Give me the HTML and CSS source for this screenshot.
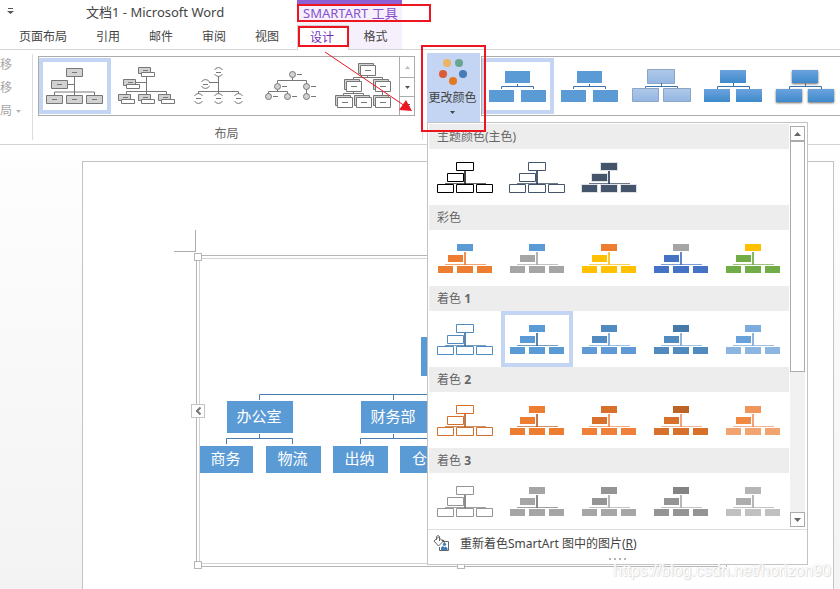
FILE: index.html
```html
<!DOCTYPE html>
<html lang="zh-CN">
<head>
<meta charset="utf-8">
<title>文档1 - Microsoft Word</title>
<link rel="stylesheet" href="styles.css">
</head>
<body>
<svg class="defs" aria-hidden="true">
  <defs>
    <linearGradient id="soft" x1="0" y1="0" x2="0" y2="1"><stop offset="0" stop-color="#b0c8e8"/><stop offset="1" stop-color="#93b7e3"/></linearGradient>
    <linearGradient id="glossy" x1="0" y1="0" x2="0" y2="1"><stop offset="0" stop-color="#6ba3dd"/><stop offset="1" stop-color="#3f8acb"/></linearGradient>
    <symbol id="solid" viewBox="0 0 72 56">
      <path class="line" d="M16 34h41v1H16z"/><path class="stem" d="M35 22h2v13h-2z"/>
      <path class="top" d="M28 14h16v7H28z"/><path class="mid" d="M19 25h15v7H19z"/>
      <path class="low" d="M9 36h15v7H9zM28 36h16v7H28zM48 36h15v7H48z"/>
    </symbol>
    <symbol id="outline" viewBox="0 0 72 56">
      <path class="line" d="M16 34h41v1H16z"/><path class="stem" d="M35 22h2v13h-2z"/>
      <path class="box" d="M27.500 13.500h17v8h-17zM18.500 24.500h16v8h-16zM8.500 35.500h16v8h-16zM27.500 35.500h17v8h-17zM47.500 35.500h16v8h-16z"/>
    </symbol>
    <symbol id="flat" viewBox="0 0 72 56">
      <path class="wire" d="M35.500 26v2M19.500 31v-2.500h32V31"/>
      <path class="fill" d="M23 13h25v12H23zM7 32h25v12H7zM39 32h25v12H39z"/>
    </symbol>
  </defs>
</svg>

<header class="app-header">
  <div class="main-head">
    <div class="title-row">
      <button class="quick" aria-label="自定义快速访问工具栏"><svg width="7" height="8" viewBox="0 0 7 8"><path d="M1 0h5v1H1zM0 3h7L3.500 6z"/></svg></button>
      <span class="doc-title">文档1 - Microsoft Word</span>
    </div>
    <nav class="tabs">
      <button>页面布局</button><button>引用</button><button>邮件</button><button>审阅</button><button>视图</button>
    </nav>
  </div>
  <div class="context-head">
    <div class="context-title">SMARTART 工具</div>
    <nav class="context-tabs"><button class="active">设计</button><button>格式</button></nav>
  </div>
</header>

<section class="ribbon">
  <div class="commands">
    <button>移</button><button>移</button>
    <button>局 <svg width="5" height="3" viewBox="0 0 5 3"><path d="M0 0h5L2.500 3z"/></svg></button>
  </div>
  <div class="group">
    <div class="gallery">
      <button class="cell selected" aria-label="组织结构图">
        <svg class="thumb layout" viewBox="0 0 72 56"><path class="wire" d="M35.500 19v15M29 26.500h6M15.500 37v-3h40v3M35.500 34v3"/><path class="shade" d="M27.500 10.500h16v8h-16zM12.500 22.500h16v8h-16zM7.500 37.500h16v8h-16zM27.500 37.500h16v8h-16zM47.500 37.500h16v8h-16z"/><path class="wire" d="M33 14.500h5M18 26.500h5M13 41.500h5M33 41.500h5M53 41.500h5"/></svg>
      </button>
      <button class="cell" aria-label="姓名和职务组织结构图">
        <svg class="thumb layout" viewBox="0 0 72 56"><path class="wire" d="M35.500 18v18M24 24.500h11M15.500 36v-2.500h40V36"/><path class="shade" d="M27.500 9.500h12v6h-12zM12.500 21.500h12v6h-12zM7.500 36.500h12v6h-12zM27.500 36.500h12v6h-12zM47.500 36.500h12v6h-12z"/><path class="wire" d="M32 12.500h5M17 24.500h5M12 39.500h5M32 39.500h5M52 39.500h5"/><path class="plain" d="M30.500 14.500h13v4h-13zM15.500 26.500h13v4h-13zM10.500 41.500h13v4h-13zM30.500 41.500h13v4h-13zM50.500 41.500h13v4h-13z"/></svg>
      </button>
      <button class="cell" aria-label="半圆组织结构图">
        <svg class="thumb layout" viewBox="0 0 72 56"><path class="wire" d="M35.500 18v18M26 24.500h9M15.500 36v-2.500h40V36M33 14.500h5M20 26.500h5M13 40.500h5M33 40.500h5M53 40.500h5"/><path class="wire" d="M31.500 12a4.500 4.500 0 0 1 8 0M31.500 16a4.500 4.500 0 0 0 8 0M18.500 24a4.500 4.500 0 0 1 8 0M18.500 28a4.500 4.500 0 0 0 8 0M11.500 38a4.500 4.500 0 0 1 8 0M11.500 43a4.500 4.500 0 0 0 8 0M31.500 38a4.500 4.500 0 0 1 8 0M31.500 43a4.500 4.500 0 0 0 8 0M51.500 38a4.500 4.500 0 0 1 8 0M51.500 43a4.500 4.500 0 0 0 8 0"/></svg>
      </button>
      <button class="cell" aria-label="圆形图片层次结构">
        <svg class="thumb layout" viewBox="0 0 72 56"><path class="wire" d="M37.500 19v3.500M22.500 25v-2.500h29V38M22.500 31v2.500M13.500 36v-2.500h19V36M42 16.500h5M27 28.500h5M56 28.500h5M18 38.500h5M37 38.500h5M56 38.500h5"/><g class="shade"><circle cx="37.500" cy="16.500" r="3"/><circle cx="22.500" cy="28.500" r="3"/><circle cx="51.500" cy="28.500" r="3"/><circle cx="13.500" cy="38.500" r="3"/><circle cx="32.500" cy="38.500" r="3"/><circle cx="51.500" cy="38.500" r="3"/></g></svg>
      </button>
      <button class="cell" aria-label="层次结构">
        <svg class="thumb layout" viewBox="0 0 72 56"><path class="wire" d="M40.500 18v2M26.500 22v-2.500h29V22M26.500 34v2M16.500 38v-2.500h20V38M55.500 34v4"/><path class="shade" d="M31.500 5.500h15v10h-15zM17.500 21.500h15v10h-15zM46.500 21.500h15v10h-15zM8.500 37.500h15v10h-15zM27.500 37.500h15v10h-15zM46.500 37.500h15v10h-15z"/><path class="plain" d="M33.500 7.500h15v10h-15zM19.500 23.500h15v10h-15zM48.500 23.500h15v10h-15zM10.500 39.500h15v10h-15zM29.500 39.500h15v10h-15zM48.500 39.500h15v10h-15z"/><path class="wire" d="M38 12.500h6M24 28.500h6M53 28.500h6M15 44.500h6M34 44.500h6M53 44.500h6"/></svg>
      </button>
      <div class="spinner">
        <button class="off" aria-label="上一行"><svg width="5" height="3" viewBox="0 0 5 3"><path d="M0 3h5L2.500 0z"/></svg></button>
        <button aria-label="下一行"><svg width="5" height="3" viewBox="0 0 5 3"><path d="M0 0h5L2.500 3z"/></svg></button>
        <button aria-label="其他"><svg width="5" height="5" viewBox="0 0 5 5"><path d="M0 0h5v1H0zM0 2h5L2.500 5z"/></svg></button>
      </div>
    </div>
    <div class="group-name">布局</div>
  </div>

  <div class="colors">
    <button class="change-colors" aria-expanded="true">
      <svg width="30" height="28" viewBox="0 0 30 28"><circle cx="9" cy="5" r="4" fill="#ecb363"/><circle cx="21" cy="5" r="4" fill="#68a48f"/><circle cx="5" cy="16" r="4" fill="#dc5a38"/><circle cx="25" cy="16" r="4" fill="#467bb5"/><circle cx="15" cy="23" r="4" fill="#e47723"/></svg>
      <span>更改颜色</span>
      <svg width="5" height="3" viewBox="0 0 5 3"><path d="M0 0h5L2.500 3z"/></svg>
    </button>

    <div class="menu">
      <div class="menu-body">
        <div class="sections">
          <h2>主题颜色(主色)</h2>
          <div class="swatches">
            <button class="cell"><svg class="thumb black"><use href="#outline"/></svg></button>
            <button class="cell"><svg class="thumb navy"><use href="#outline"/></svg></button>
            <button class="cell"><svg class="thumb navy rimmed"><use href="#solid"/></svg></button>
          </div>
          <h2>彩色</h2>
          <div class="swatches">
            <button class="cell"><svg class="thumb mix-1"><use href="#solid"/></svg></button>
            <button class="cell"><svg class="thumb mix-2"><use href="#solid"/></svg></button>
            <button class="cell"><svg class="thumb mix-3"><use href="#solid"/></svg></button>
            <button class="cell"><svg class="thumb mix-4"><use href="#solid"/></svg></button>
            <button class="cell"><svg class="thumb mix-5"><use href="#solid"/></svg></button>
          </div>
          <h2>着色 <b>1</b></h2>
          <div class="swatches">
            <button class="cell"><svg class="thumb blue-1"><use href="#outline"/></svg></button>
            <button class="cell selected"><svg class="thumb blue-2"><use href="#solid"/></svg></button>
            <button class="cell"><svg class="thumb blue-3"><use href="#solid"/></svg></button>
            <button class="cell"><svg class="thumb blue-4"><use href="#solid"/></svg></button>
            <button class="cell"><svg class="thumb blue-5"><use href="#solid"/></svg></button>
          </div>
          <h2>着色 <b>2</b></h2>
          <div class="swatches">
            <button class="cell"><svg class="thumb orange-1"><use href="#outline"/></svg></button>
            <button class="cell"><svg class="thumb orange-2"><use href="#solid"/></svg></button>
            <button class="cell"><svg class="thumb orange-3"><use href="#solid"/></svg></button>
            <button class="cell"><svg class="thumb orange-4"><use href="#solid"/></svg></button>
            <button class="cell"><svg class="thumb orange-5"><use href="#solid"/></svg></button>
          </div>
          <h2>着色 <b>3</b></h2>
          <div class="swatches">
            <button class="cell"><svg class="thumb gray-1"><use href="#outline"/></svg></button>
            <button class="cell"><svg class="thumb gray-2"><use href="#solid"/></svg></button>
            <button class="cell"><svg class="thumb gray-3"><use href="#solid"/></svg></button>
            <button class="cell"><svg class="thumb gray-4"><use href="#solid"/></svg></button>
            <button class="cell"><svg class="thumb gray-5"><use href="#solid"/></svg></button>
          </div>
        </div>
        <div class="scrollbar">
          <button aria-label="向上滚动"><svg width="7" height="4" viewBox="0 0 7 4"><path d="M0 4h7L3.500 0z"/></svg></button>
          <div class="thumb-bar"></div>
          <div class="track"></div>
          <button aria-label="向下滚动"><svg width="7" height="4" viewBox="0 0 7 4"><path d="M0 0h7L3.500 4z"/></svg></button>
        </div>
      </div>
      <button class="recolor">
        <svg width="17" height="17" viewBox="0 0 17 17"><path d="M7 6.500h8.500v9h-9V12" fill="#fff" stroke="#666"/><path d="M8 15v-2.500l2-1.500 1.500 1.500 1-1 2 1.500v2z" fill="#3d78b8"/><circle cx="11.500" cy="9.300" r="1.600" fill="#3d78b8"/><path d="M1 6l4.500-4L10 6.500 5.500 11zM3.500 5V1.500q1.500-2 3 0V6" fill="#fff" stroke="#666"/><path d="M8.500 4.500q4 0 3 4-1-2-2-2z" fill="#555"/></svg>
        <span>重新着色SmartArt 图中的图片(<u>R</u>)</span>
      </button>
      <div class="grip"></div>
    </div>
  </div>

  <div class="gallery styles">
    <button class="cell selected" aria-label="简单填充"><svg class="thumb"><use href="#flat"/></svg></button>
    <button class="cell" aria-label="白色轮廓"><svg class="thumb"><use href="#flat"/></svg></button>
    <button class="cell" aria-label="细微效果"><svg class="thumb" viewBox="0 0 72 56"><g fill="url(#soft)" stroke="#8aa5c5"><path d="M21.500 11.500h27v14h-27z"/><path d="M6.500 30.500h26v13h-26z"/><path d="M37.500 30.500h27v13h-27z"/></g><path class="wire" d="M35.500 25v3M19.500 30v-1.500h32V30"/></svg></button>
    <button class="cell" aria-label="中等效果"><svg class="thumb" viewBox="0 0 72 56"><path class="wire" d="M35.500 25v3M19.500 31v-2.500h32V31"/><g fill="url(#glossy)"><path d="M22 12h26v13H22z"/><path d="M6 31h26v13H6z"/><path d="M38 31h26v13H38z"/></g></svg></button>
    <button class="cell" aria-label="强烈效果"><svg class="thumb" viewBox="0 0 72 56"><path class="wire" d="M35.500 25v3M19.500 31v-2.500h32V31"/><g class="raised" fill="url(#glossy)"><path d="M22 12h26v13H22z"/><path d="M6 31h26v13H6z"/><path d="M38 31h26v13H38z"/></g></svg></button>
  </div>
</section>

<main class="workspace">
  <div class="page">
    <div class="crop-mark"></div>
    <div class="art-frame">
      <div class="art">
        <svg class="links" width="528" height="304" viewBox="0 0 528 304"><path d="M59.500 141v-5.500H240M193.500 136v5M59.500 175v5M26.500 185v-5.500h66v5.500M193.500 175v5M160.500 185v-5.500h67v5.500"/></svg>
        <div class="node root"></div>
        <div class="node office">办公室</div>
        <div class="node finance">财务部</div>
        <div class="node leaf trade">商务</div>
        <div class="node leaf logistics">物流</div>
        <div class="node leaf cashier">出纳</div>
        <div class="node leaf store">仓</div>
      </div>
      <i class="handle nw"></i><i class="handle sw"></i><i class="handle south"></i><i class="handle se"></i>
      <button class="text-pane" aria-label="文本窗格"><svg width="5" height="8" viewBox="0 0 5 8"><path d="M4.500.5L1 4l3.500 3.500"/></svg></button>
    </div>
  </div>
</main>

<svg class="marks" width="500" height="140" viewBox="0 0 500 140" aria-hidden="true">
  <path class="mark-box" d="M298 5h132v16H298zM299 27h49v19h-49zM422 46h63v85h-63z"/>
  <path class="mark-line" d="M325 52l80 54"/><path class="mark-head" d="M412 111l-13-1 7-10z"/>
</svg>
<div class="watermark">https://blog.csdn.net/horizon90</div>
</body>
</html>
```
FILE: styles.css
```css
* { box-sizing: border-box; }
body {
  margin: 0;
  min-height: 100vh;
  display: flex;
  flex-direction: column;
  position: relative;
  overflow: hidden;
  background: #fff;
  color: #444;
  font: 12px/16px "Noto Sans", "Noto Sans CJK SC", sans-serif;
}
button {
  margin: 0;
  padding: 0;
  border: 0;
  background: none;
  color: inherit;
  font: inherit;
}
svg { display: block; flex: none; }
.defs { position: absolute; width: 0; height: 0; }

/* Title bar and tabs */
.app-header { display: flex; border-bottom: 1px solid #d4d4d4; }
.main-head { width: 297px; }
.title-row { display: flex; align-items: center; height: 24px; padding-left: 7px; font-size: 13px; }
.quick { width: 79px; fill: #555; }
.tabs { display: flex; gap: 29px; height: 25px; padding-left: 19px; white-space: nowrap; }
.context-head { width: 105px; margin-bottom: -1px; background: #f6f0fc; border-top: 4px solid #8f5fd4; }
.context-title { height: 21px; padding-left: 6px; font-size: 13px; line-height: 18px; color: #8650cf; white-space: nowrap; }
.context-tabs { display: grid; grid-template-columns: 52px 53px; height: 25px; }
.context-tabs button { border-bottom: 1px solid #d4d4d4; }
.context-tabs .active { padding-right: 2px; background: #fff; color: #6d2fb8; border: 1px solid #d4d4d4; border-bottom: 0; }

/* Ribbon */
.ribbon { display: flex; align-items: flex-start; border-bottom: 1px solid #d4d4d4; }
.commands {
  display: flex;
  flex-direction: column;
  align-items: flex-start;
  gap: 7px;
  width: 33px;
  height: 86px;
  margin: 4px 5px 4px 0;
  padding-top: 3px;
  border-right: 1px solid #dcdcdc;
  color: #a5a5a5;
}
.commands button { display: flex; align-items: center; gap: 4px; fill: #b5b5b5; }
.group { margin-top: 6px; width: 377px; }
.group-name { margin-top: 10px; text-align: center; color: #666; }
.gallery { display: flex; height: 60px; border: 1px solid #ababab; padding-top: 1px; }
.cell { width: 72px; height: 56px; flex: none; }
.selected { box-shadow: inset 0 0 0 4px #c3d5f2; }
.thumb { width: 72px; height: 56px; }
.wire { fill: none; stroke: #3b74ad; }
.fill { fill: #5b9bd5; }
.layout .wire { stroke: #777; }
.layout .shade { fill: #d2d2d2; stroke: #777; }
.layout .plain { fill: #fff; stroke: #777; }
.spinner { display: grid; grid-template-rows: 20px 19px 19px; flex: 1; margin-top: -1px; border-left: 1px solid #ababab; }
.spinner button { display: grid; place-items: center; fill: #555; }
.spinner button + button { border-top: 1px solid #ababab; }
.spinner .off { fill: #bbb; }
.styles { flex: 1; min-width: 0; margin-top: 6px; margin-left: 1px; border-right: 0; overflow: hidden; }
.raised { filter: drop-shadow(0 1px 1px #666); }

/* Change-colours button and its menu */
.colors { position: relative; margin-top: 3px; margin-left: 7px; padding-left: 5px; }
.colors::before { content: ""; position: absolute; left: 0; top: 1px; height: 86px; border-left: 1px solid #dcdcdc; }
.change-colors {
  display: flex;
  flex-direction: column;
  align-items: center;
  width: 53px;
  height: 69px;
  padding: 5px 2px 0 0;
  background: #c3d5f2;
  white-space: nowrap;
  fill: #444;
}
.change-colors span { margin: 4px 0 5px; }
.menu {
  position: absolute;
  z-index: 2;
  top: 69px;
  left: 5px;
  width: 381px;
  padding-top: 1px;
  border: 1px solid #c3c3c3;
  background: #fff;
}
.menu-body { display: flex; gap: 1px; padding-left: 1px; }
.sections { width: 360px; }
.sections h2 { margin: 0; height: 25px; padding-left: 8px; background: #ededed; color: #666; font-size: 12px; line-height: 25px; font-weight: 400; }
.swatches { display: flex; height: 56px; }
.scrollbar { display: flex; flex-direction: column; width: 15px; margin: 2px 0; }
.scrollbar button { display: grid; place-items: center; height: 15px; border: 1px solid #ababab; background: #fff; fill: #666; }
.thumb-bar { height: 231px; border: 1px solid #ababab; background: #fff; }
.track { flex: 1; background: #f1f1f1; }
.recolor { display: flex; gap: 10px; width: 379px; height: 29px; padding: 5px 0 0 5px; border-top: 1px solid #dedede; white-space: nowrap; line-height: 18px; }
.grip { width: 18px; height: 2px; margin: 0 auto 4px; background: repeating-linear-gradient(90deg, #b5b5b5 0 2px, #fff 2px 5px); }

/* Thumbnail colours */
.line { fill: var(--line); opacity: .7; }
.stem { fill: var(--line); opacity: .85; }
.top, .mid, .low { stroke: var(--rim, none); stroke-width: 2px; paint-order: stroke; }
.top { fill: var(--top); }
.mid { fill: var(--mid); }
.low { fill: var(--low); }
.box { fill: #fff; stroke: var(--top); }
.black { --top: #000; --line: #222; }
.navy { --top: #44546a; --mid: #44546a; --low: #44546a; --line: #303f55; }
.rimmed { --rim: #dfe1e5; }
.mix-1 { --top: #5b9bd5; --mid: #ed7d31; --low: #ed7d31; --line: #ed7d31; }
.mix-2 { --top: #5b9bd5; --mid: #a5a5a5; --low: #a5a5a5; --line: #a5a5a5; }
.mix-3 { --top: #ed7d31; --mid: #ffc000; --low: #ffc000; --line: #f5bd18; }
.mix-4 { --top: #a5a5a5; --mid: #4472c4; --low: #4472c4; --line: #4472c4; }
.mix-5 { --top: #ffc000; --mid: #70ad47; --low: #70ad47; --line: #70ad47; }
.blue-1 { --top: #518abf; --line: #3f709d; }
.blue-2 { --top: #5b9bd5; --mid: #5b9bd5; --low: #5b9bd5; --line: #3f709d; }
.blue-3 { --top: #508abf; --mid: #508abf; --low: #5f9ad6; --line: #6fa5d9; }
.blue-4 { --top: #467aa9; --mid: #508abf; --low: #508abf; --line: #7ba6d4; }
.blue-5 { --top: #7cacdd; --mid: #69a2da; --low: #8cb6e1; --line: #7ba6d4; }
.orange-1 { --top: #d5702c; --line: #b8622b; }
.orange-2 { --top: #ed7d31; --mid: #ed7d31; --low: #ed7d31; --line: #b8622b; }
.orange-3 { --top: #d6702b; --mid: #d6702b; --low: #ee803a; --line: #f08a4b; }
.orange-4 { --top: #bc6326; --mid: #d6702b; --low: #d6702b; --line: #ec9266; }
.orange-5 { --top: #f1965b; --mid: #ef8841; --low: #f2a470; --line: #ec9266; }
.gray-1 { --top: #949494; --line: #777; }
.gray-2 { --top: #a5a5a5; --mid: #a5a5a5; --low: #a5a5a5; --line: #777; }
.gray-3 { --top: #949494; --mid: #949494; --low: #a6a6a6; --line: #aaa; }
.gray-4 { --top: #838383; --mid: #949494; --low: #949494; --line: #aaa; }
.gray-5 { --top: #b5b5b5; --mid: #adadad; --low: #c0c0c0; --line: #aaa; }

/* Document */
.workspace { flex: 1; display: flex; padding: 16px 6px 0 82px; background: linear-gradient(#fefefe, #f3f3f3); }
.page { flex: 1; position: relative; padding: 93px 108px 0 113px; border: 1px solid #c3c3c3; border-bottom: 0; background: #fff; }
.crop-mark { position: absolute; left: 91px; top: 68px; width: 22px; height: 22px; border: solid #ababab; border-width: 0 1px 1px 0; }
.art-frame { position: relative; height: 312px; padding: 2px; border: 1px solid #b5b5b5; }
.art { position: relative; height: 306px; border: 1px solid #d3d3d3; }
.links { position: absolute; left: 0; top: 0; fill: none; stroke: #477eae; }
.node { position: absolute; height: 32px; padding-right: 2px; background: #5b9bd5; color: #fff; font-size: 15px; line-height: 30px; text-align: center; white-space: nowrap; }
.leaf { top: 187px; width: 55px; height: 27px; line-height: 25px; }
.root { left: 221px; top: 78px; width: 90px; height: 39px; }
.office { left: 27px; top: 142px; width: 66px; }
.finance { left: 161px; top: 142px; width: 66px; }
.trade { left: 0; width: 53px; }
.logistics { left: 66px; }
.cashier { left: 133px; }
.store { left: 200px; padding-left: 12px; text-align: left; }
.handle { position: absolute; width: 8px; height: 8px; border: 1px solid #b5b5b5; background: #fff; }
.nw { left: -3px; top: -3px; }
.sw { left: -3px; bottom: -3px; }
.south { left: calc(50% - 4px); bottom: -3px; }
.se { right: -3px; bottom: -3px; }
.text-pane { position: absolute; left: -6px; top: 148px; display: grid; place-items: center; width: 14px; height: 14px; border: 1px solid #c3c3c3; background: #fff; fill: none; stroke: #777; stroke-width: 2px; }

.marks { position: absolute; z-index: 3; left: 0; top: 0; pointer-events: none; }
.mark-box { fill: none; stroke: #ed1520; stroke-width: 2px; }
.mark-line { stroke: #ed1520; }
.mark-head { fill: #ed1520; }
.watermark { position: absolute; z-index: 3; right: 9px; bottom: 8px; font: 16px/20px "Liberation Sans", sans-serif; color: #fff; text-shadow: 0 0 1px #ccc, 1px 1px 1px #ddd; }
```
